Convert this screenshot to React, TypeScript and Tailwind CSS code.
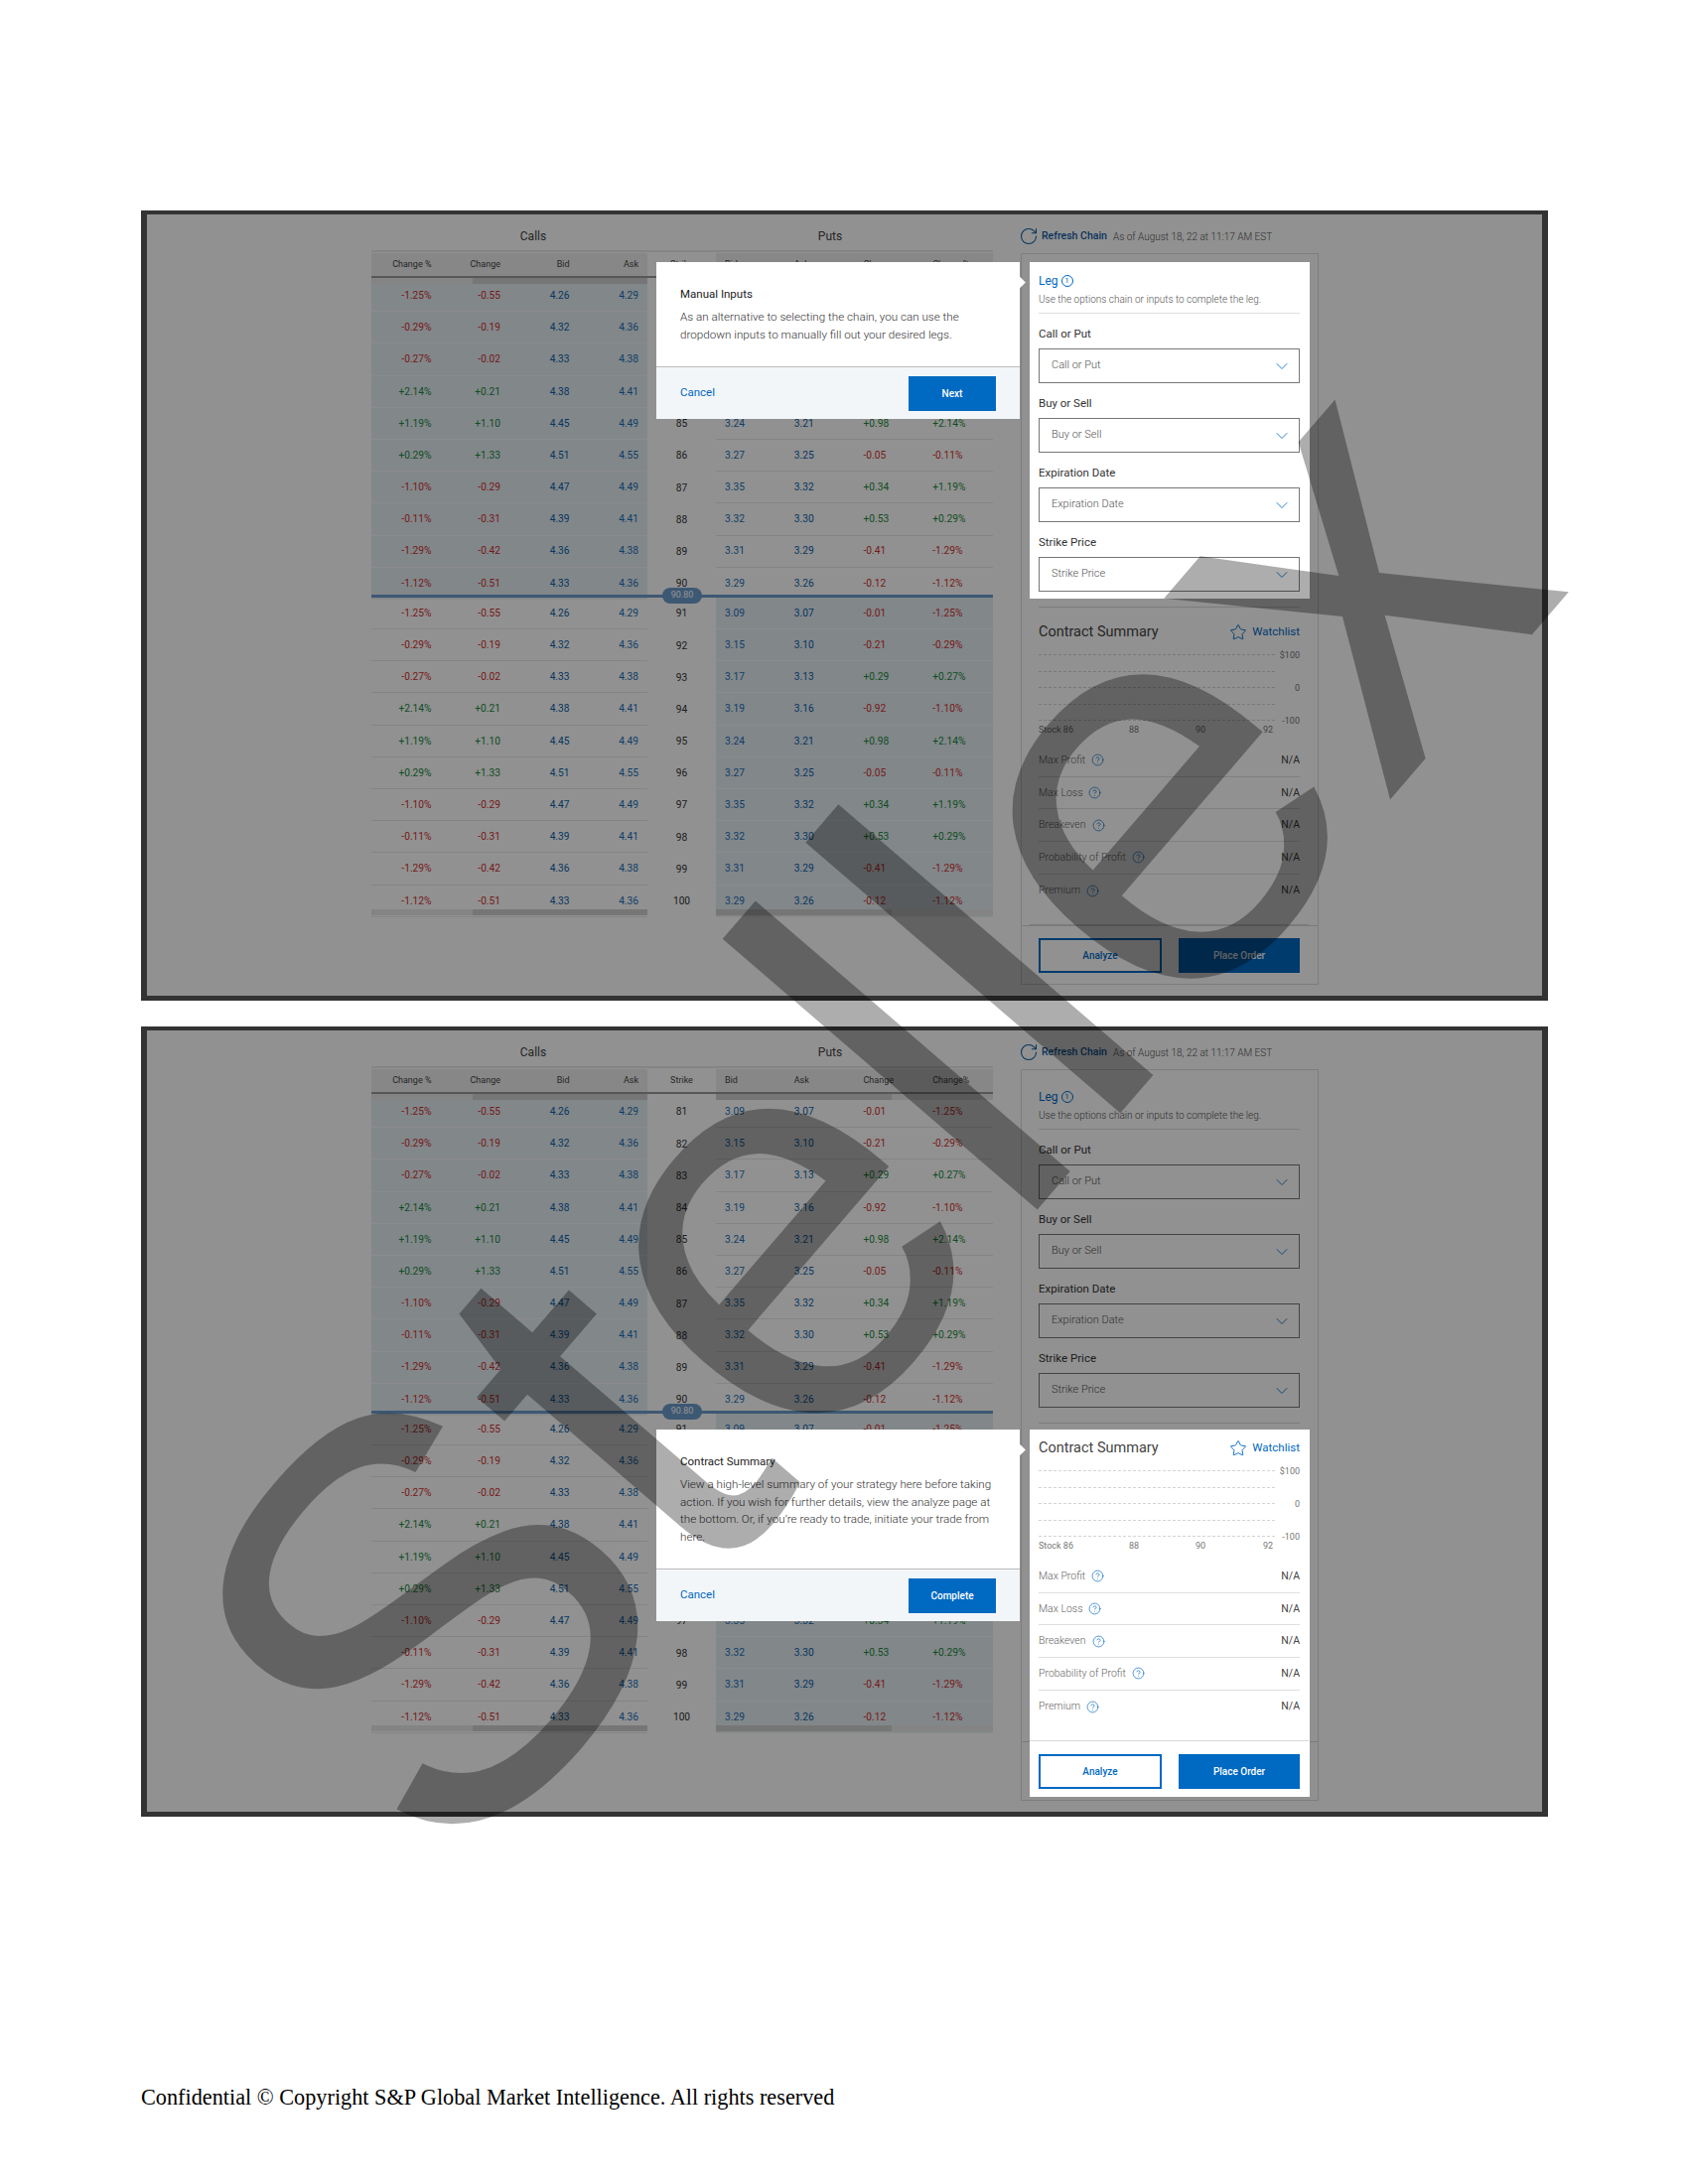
import { ChevronDown, CircleHelp, RotateCw, Star } from "lucide-react";

const calls = [
  ["-1.25%", "-0.55", "4.26", "4.29"],
  ["-0.29%", "-0.19", "4.32", "4.36"],
  ["-0.27%", "-0.02", "4.33", "4.38"],
  ["+2.14%", "+0.21", "4.38", "4.41"],
  ["+1.19%", "+1.10", "4.45", "4.49"],
  ["+0.29%", "+1.33", "4.51", "4.55"],
  ["-1.10%", "-0.29", "4.47", "4.49"],
  ["-0.11%", "-0.31", "4.39", "4.41"],
  ["-1.29%", "-0.42", "4.36", "4.38"],
  ["-1.12%", "-0.51", "4.33", "4.36"],
];

const puts = [
  ["3.09", "3.07", "-0.01", "-1.25%"],
  ["3.15", "3.10", "-0.21", "-0.29%"],
  ["3.17", "3.13", "+0.29", "+0.27%"],
  ["3.19", "3.16", "-0.92", "-1.10%"],
  ["3.24", "3.21", "+0.98", "+2.14%"],
  ["3.27", "3.25", "-0.05", "-0.11%"],
  ["3.35", "3.32", "+0.34", "+1.19%"],
  ["3.32", "3.30", "+0.53", "+0.29%"],
  ["3.31", "3.29", "-0.41", "-1.29%"],
  ["3.29", "3.26", "-0.12", "-1.12%"],
];

const strikes = Array.from({ length: 20 }, (_, i) => 81 + i);

const changeColor = (v: string) => (v.startsWith("+") ? "text-[#1c8a3c]" : "text-[#d03030]");

const OptionsTable = () => (
  <div className="w-[626px] shrink-0">
    <div className="flex h-[28px] items-center text-[12px] text-[#444]">
      <div className="w-[326px] text-center">Calls</div>
      <div className="w-[272px] text-center">Puts</div>
    </div>
    <div className="flex h-[28px] border-t-2 border-b-2 border-t-[#e8e8e8] border-b-[#9a9a9a] pt-px text-[9px] text-[#444]">
      <div className="grid w-[278px] grid-cols-4 items-center bg-[#eeeeee] text-right">
        <div className="pr-[9px]">Change %</div>
        <div className="pr-[9px]">Change</div>
        <div className="pr-[9px]">Bid</div>
        <div className="pr-[9px]">Ask</div>
      </div>
      <div className="flex w-[69px] items-center justify-center">Strike</div>
      <div className="grid w-[279px] grid-cols-4 items-center bg-[#eeeeee]">
        <div className="pl-[9px]">Bid</div>
        <div className="pl-[9px]">Ask</div>
        <div className="pl-[9px]">Change</div>
        <div className="pl-[9px]">Change%</div>
      </div>
    </div>
    <div className="relative pt-[2px] text-[10.2px]">
      {strikes.map((strike, i) => {
        const c = calls[i % 10];
        const p = puts[i % 10];
        const callsShaded = i < 10;
        return (
          <div key={strike} className={`flex h-[32.2px] ${i === 10 ? "-mt-[2px]" : ""}`}>
            <div
              className={`grid w-[278px] grid-cols-4 items-center border-b text-right ${
                callsShaded ? "border-[#f2f5f7] bg-[#e4edf2]" : "border-[#e8e8e8]"
              }`}
            >
              <div className={`pr-[9px] ${changeColor(c[0])}`}>{c[0]}</div>
              <div className={`pr-[9px] ${changeColor(c[1])}`}>{c[1]}</div>
              <div className="pr-[9px] text-[#0b5fa8]">{c[2]}</div>
              <div className="pr-[9px] text-[#1a6fb5]">{c[3]}</div>
            </div>
            <div className="flex w-[69px] items-center justify-center text-[#333]">{strike}</div>
            <div
              className={`grid w-[279px] grid-cols-4 items-center border-b ${
                callsShaded ? "border-[#e8e8e8]" : "border-[#f2f5f7] bg-[#e4edf2]"
              }`}
            >
              <div className="pl-[9px] text-[#1a6fb5]">{p[0]}</div>
              <div className="pl-[9px] text-[#0b5fa8]">{p[1]}</div>
              <div className={`pl-[9px] ${changeColor(p[2])}`}>{p[2]}</div>
              <div className={`pl-[9px] ${changeColor(p[3])}`}>{p[3]}</div>
            </div>
          </div>
        );
      })}

      {/* scrollbars of the two scrolling halves */}
      <div className="absolute top-0 left-0 flex h-[6px] w-[278px] bg-[#e8e8e8]">
        <div className="ml-[102px] flex-1 bg-[#cfcfcf]" />
      </div>
      <div className="absolute top-0 left-[347px] flex h-[6px] w-[279px] bg-[#e8e8e8]">
        <div className="w-[177px] bg-[#cfcfcf]" />
      </div>
      <div className="absolute top-[636px] left-0 flex h-[6px] w-[278px] bg-[#e8e8e8]">
        <div className="ml-[102px] flex-1 bg-[#cfcfcf]" />
      </div>
      <div className="absolute top-[636px] left-[347px] flex h-[6px] w-[279px] bg-[#e8e8e8]">
        <div className="w-[177px] bg-[#cfcfcf]" />
      </div>

      {/* current price */}
      <div className="absolute top-[319px] left-0 h-[3px] w-full bg-[#6c9ccb]" />
      <div className="absolute top-[312px] left-[293px] flex h-[16px] w-[40px] items-center justify-center rounded-full bg-[#6c9ccb] text-[9px] text-white">
        90.80
      </div>
    </div>
  </div>
);

const SelectField = ({ label }: { label: string }) => (
  <div>
    <div className="mt-[12px] mb-[7px] h-[16px] text-[11.5px] leading-[16px] text-[#333]">{label}</div>
    <div className="flex h-[35px] items-center justify-between border border-[#777] pr-[7px] pl-[12px] text-[11px] font-light text-[#555]">
      <span>{label}</span>
      <ChevronDown size={20} strokeWidth={1} className="text-[#0069c2]" />
    </div>
  </div>
);

const summaryRows = [
  { label: "Max Profit" },
  { label: "Max Loss" },
  { label: "Breakeven" },
  { label: "Probability of Profit" },
  { label: "Premium" },
];

const SidePanel = ({ highlight }: { highlight: "form" | "summary" }) => (
  <div className="w-[300px] shrink-0">
    <div className="flex h-[28px] items-center text-[10.5px]">
      <RotateCw size={20} strokeWidth={1.25} className="-ml-[2px] text-[#0f5c9f]" />
      <span className="ml-[3px] font-medium text-[#0f5c9f]">Refresh Chain</span>
      <span className="ml-[6px] text-[10px] font-light text-[#555]">As of August 18, 22 at 11:17 AM EST</span>
    </div>
    <div className="relative mt-[3px] h-[737px] border border-[#dcdcdc] pt-[8px] pr-[18px] pl-[17px]">
      <div className="absolute top-[676px] left-0 h-px w-full bg-[#d8d8d8]" />
      <div
        className={`-mr-[10px] -ml-[9px] pr-[10px] pb-[7px] pl-[9px] ${
          highlight === "form" ? "relative z-20 bg-white" : ""
        }`}
      >
        <div className="border-b border-[#dfdfdf] pt-[10px] pb-[4px]">
          <div className="flex h-[18px] items-center text-[12px] text-[#0069c2]">
            Leg
            <span className="ml-[3px] flex h-[12px] w-[12px] items-center justify-center rounded-full border border-[#0069c2] text-[8px]">
              1
            </span>
          </div>
          <div className="mt-px h-[18px] text-[10px] leading-[18px] font-light text-[#555]">
            Use the options chain or inputs to complete the leg.
          </div>
        </div>
        <SelectField label="Call or Put" />
        <SelectField label="Buy or Sell" />
        <SelectField label="Expiration Date" />
        <SelectField label="Strike Price" />
      </div>
      <div className="mt-[8px] border-t border-[#dcdcdc]" />
      <div
        className={`-mr-[10px] -ml-[9px] mt-[6px] pt-[9px] pr-[10px] pb-[8px] pl-[9px] ${
          highlight === "summary" ? "relative z-20 bg-white" : ""
        }`}
      >
        <div className="flex h-[20px] items-center justify-between">
          <span className="text-[14.5px] text-[#444]">Contract Summary</span>
          <span className="flex items-center gap-[5px] text-[11.5px] text-[#0069c2]">
            <Star size={18} strokeWidth={1.25} />
            Watchlist
          </span>
        </div>
        <div className="mt-[6px] flex items-start justify-between text-[9px] text-[#777]">
          <div className="w-[238px] pt-[6px]">
            <div className="flex h-[67px] flex-col justify-between">
              <div className="border-t border-dashed border-[#d4d4d4]" />
              <div className="border-t border-dashed border-[#d4d4d4]" />
              <div className="border-t border-dashed border-[#d4d4d4]" />
              <div className="border-t border-dashed border-[#d4d4d4]" />
              <div className="border-t border-dashed border-[#d4d4d4]" />
            </div>
            <div className="mt-[2px] grid h-[14px] grid-cols-[91px_67px_68px_12px] items-center leading-[14px]">
              <span>Stock 86</span>
              <span>88</span>
              <span>90</span>
              <span>92</span>
            </div>
          </div>
          <div className="flex h-[80px] flex-col justify-between text-right leading-[14px]">
            <span>$100</span>
            <span>0</span>
            <span>-100</span>
          </div>
        </div>
        <div className="mt-[8px]">
          {summaryRows.map((row, i) => (
            <div
              key={row.label}
              className={`flex h-[32.7px] items-center justify-between text-[10.5px] ${
                i < 4 ? "border-b border-[#dfdfdf]" : ""
              }`}
            >
              <span className="flex items-center gap-[6px] font-light text-[#666]">
                {row.label}
                <CircleHelp size={13} strokeWidth={1.25} className="text-[#0069c2]" />
              </span>
              <span className="text-[#444]">N/A</span>
            </div>
          ))}
        </div>
        <div className="-mx-[9px] mt-[18px] border-t border-[#d8d8d8] px-[9px] pt-[13px]">
          <div className="flex justify-between text-[10px] font-medium">
            <button className="h-[35px] w-[124px] border-2 border-[#0069c2] bg-white text-[#0069c2]">Analyze</button>
            <button className="h-[35px] w-[122px] bg-[#0069c2] text-white">Place Order</button>
          </div>
        </div>
      </div>
    </div>
  </div>
);

type DialogProps = {
  title: string;
  body: string;
  action: string;
  className: string;
  bodyHeight: string;
};

const Dialog = ({ title, body, action, className, bodyHeight }: DialogProps) => (
  <div className={`absolute left-[513px] z-20 w-[366px] bg-white ${className}`}>
    <div className="absolute top-[16px] -right-[4px] h-[9px] w-[9px] rotate-45 bg-white" />
    <div className={`px-[24px] pt-[24px] ${bodyHeight}`}>
      <div className="h-[16px] text-[11.5px] leading-[16px] text-[#222]">{title}</div>
      <p className="mt-[7px] text-[11.65px] leading-[17.5px] font-light text-[#333]">{body}</p>
    </div>
    <div className="flex h-[53px] items-center justify-between border-t border-[#bbbbbb] bg-[#f3f6f8] pr-[24px] pl-[24px]">
      <span className="text-[11.5px] text-[#0069c2]">Cancel</span>
      <button className="h-[35px] w-[88px] bg-[#0069c2] text-[10px] font-medium text-white">{action}</button>
    </div>
  </div>
);

const Frame = ({ highlight }: { highlight: "form" | "summary" }) => (
  <div className="relative flex h-[796px] w-[1417px] gap-[28px] border-t-4 border-r-[6px] border-b-[5px] border-l-[6px] border-[#333333] bg-white pt-[8px] pl-[226px]">
    <OptionsTable />
    <SidePanel highlight={highlight} />
    <div className="absolute inset-0 z-10 bg-black/43" />
    {highlight === "form" ? (
      <Dialog
        title="Manual Inputs"
        body="As an alternative to selecting the chain, you can use the dropdown inputs to manually fill out your desired legs."
        action="Next"
        className="top-[48px]"
        bodyHeight="h-[105px]"
      />
    ) : (
      <Dialog
        title="Contract Summary"
        body="View a high-level summary of your strategy here before taking action. If you wish for further details, view the analyze page at the bottom. Or, if you’re ready to trade, initiate your trade from here."
        action="Complete"
        className="top-[402px]"
        bodyHeight="h-[140px]"
      />
    )}
  </div>
);

export default function App() {
  return (
    <div className="relative h-[2200px] w-[1700px] overflow-hidden bg-white pt-[212px] pl-[142px] font-['Roboto',sans-serif]">
      <Frame highlight="form" />
      <div className="mt-[26px]">
        <Frame highlight="summary" />
      </div>
      <div className="mt-[269px] font-['Liberation_Serif',serif] text-[22.25px] leading-[28px] text-black">
        Confidential © Copyright S&amp;P Global Market Intelligence. All rights reserved
      </div>
      {/* diagonal watermark */}
      <div className="pointer-events-none absolute top-[1118px] left-[868px] z-30 -translate-x-1/2 -translate-y-1/2 -rotate-[49.3deg] font-['Liberation_Sans',sans-serif] text-[577px] leading-none whitespace-nowrap text-black/32">
        Stellex
      </div>
    </div>
  );
}
